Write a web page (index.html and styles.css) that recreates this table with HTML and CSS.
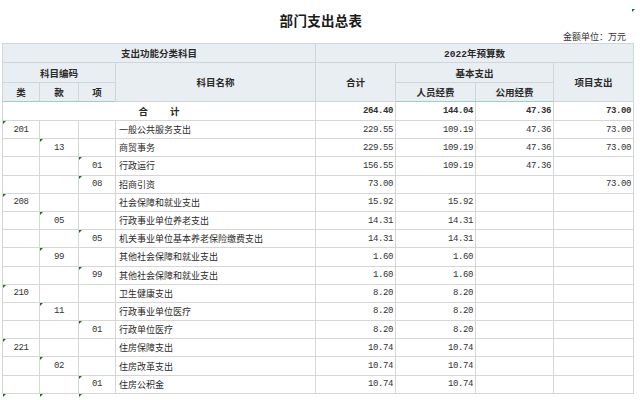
FILE: index.html
```html
<!DOCTYPE html>
<html lang="zh-CN">
<head>
<meta charset="utf-8">
<title>部门支出总表</title>
<link rel="stylesheet" href="styles.css">
</head>
<body>
<div class="page">
  <span class="corner-mark"></span>
  <h1 class="title">部门支出总表</h1>
  <div class="unit">金额单位：万元</div>
  <table class="grid">
    <colgroup>
      <col class="c-lei"><col class="c-kuan"><col class="c-xiang"><col class="c-name">
      <col class="c-num"><col class="c-num"><col class="c-num2"><col class="c-num">
    </colgroup>
    <thead>
      <tr class="h1">
        <th colspan="4">支出功能分类科目</th>
        <th colspan="4" class="yr">2022年预算数</th>
      </tr>
      <tr class="h2">
        <th colspan="3">科目编码</th>
        <th rowspan="2">科目名称</th>
        <th rowspan="2">合计</th>
        <th colspan="2">基本支出</th>
        <th rowspan="2">项目支出</th>
      </tr>
      <tr class="h3">
        <th>类</th><th>款</th><th>项</th>
        <th>人员经费</th><th>公用经费</th>
      </tr>
    </thead>
    <tbody>
      <tr class="total">
        <td colspan="4" class="sum">合<span class="gap"></span>计</td>
        <td class="n">264.40</td><td class="n">144.04</td><td class="n">47.36</td><td class="n">73.00</td>
      </tr>
      <tr><td class="code mk">201</td><td></td><td></td><td class="nm">一般公共服务支出</td><td class="n">229.55</td><td class="n">109.19</td><td class="n">47.36</td><td class="n">73.00</td></tr>
      <tr><td></td><td class="code mk">13</td><td></td><td class="nm">商贸事务</td><td class="n">229.55</td><td class="n">109.19</td><td class="n">47.36</td><td class="n">73.00</td></tr>
      <tr><td></td><td></td><td class="code mk">01</td><td class="nm">行政运行</td><td class="n">156.55</td><td class="n">109.19</td><td class="n">47.36</td><td class="n"></td></tr>
      <tr><td></td><td></td><td class="code mk">08</td><td class="nm">招商引资</td><td class="n">73.00</td><td class="n"></td><td class="n"></td><td class="n">73.00</td></tr>
      <tr><td class="code mk">208</td><td></td><td></td><td class="nm">社会保障和就业支出</td><td class="n">15.92</td><td class="n">15.92</td><td class="n"></td><td class="n"></td></tr>
      <tr><td></td><td class="code mk">05</td><td></td><td class="nm">行政事业单位养老支出</td><td class="n">14.31</td><td class="n">14.31</td><td class="n"></td><td class="n"></td></tr>
      <tr><td></td><td></td><td class="code mk">05</td><td class="nm">机关事业单位基本养老保险缴费支出</td><td class="n">14.31</td><td class="n">14.31</td><td class="n"></td><td class="n"></td></tr>
      <tr><td></td><td class="code mk">99</td><td></td><td class="nm">其他社会保障和就业支出</td><td class="n">1.60</td><td class="n">1.60</td><td class="n"></td><td class="n"></td></tr>
      <tr><td></td><td></td><td class="code mk">99</td><td class="nm">其他社会保障和就业支出</td><td class="n">1.60</td><td class="n">1.60</td><td class="n"></td><td class="n"></td></tr>
      <tr><td class="code mk">210</td><td></td><td></td><td class="nm">卫生健康支出</td><td class="n">8.20</td><td class="n">8.20</td><td class="n"></td><td class="n"></td></tr>
      <tr><td></td><td class="code mk">11</td><td></td><td class="nm">行政事业单位医疗</td><td class="n">8.20</td><td class="n">8.20</td><td class="n"></td><td class="n"></td></tr>
      <tr><td></td><td></td><td class="code mk">01</td><td class="nm">行政单位医疗</td><td class="n">8.20</td><td class="n">8.20</td><td class="n"></td><td class="n"></td></tr>
      <tr><td class="code mk">221</td><td></td><td></td><td class="nm">住房保障支出</td><td class="n">10.74</td><td class="n">10.74</td><td class="n"></td><td class="n"></td></tr>
      <tr><td></td><td class="code mk">02</td><td></td><td class="nm">住房改革支出</td><td class="n">10.74</td><td class="n">10.74</td><td class="n"></td><td class="n"></td></tr>
      <tr><td></td><td></td><td class="code mk">01</td><td class="nm">住房公积金</td><td class="n">10.74</td><td class="n">10.74</td><td class="n"></td><td class="n"></td></tr>
      <tr class="ghost"><td class="mk"></td><td class="mk"></td><td class="mk"></td><td></td><td></td><td></td><td></td><td></td></tr>
    </tbody>
  </table>
</div>
</body>
</html>
```
FILE: styles.css
```css
html, body {
  margin: 0;
  padding: 0;
  background: #ffffff;
}
body {
  font-family: "Noto Sans CJK SC", "Noto Sans", sans-serif;
  color: #2b2b2b;
  width: 640px;
  height: 400px;
  overflow: hidden;
}
.page {
  position: relative;
  padding: 12px 0 0 2px;
}
.corner-mark {
  position: absolute;
  left: 632px;
  top: 9px;
  width: 0;
  height: 0;
  border-top: 3px solid #1f6e1f;
  border-right: 3px solid transparent;
}
.title {
  margin: 0;
  height: 16px;
  line-height: 16px;
  font-size: 13.5px;
  font-weight: bold;
  letter-spacing: 0.3px;
  text-align: center;
  color: #1a1a1a;
}
.unit {
  margin-top: 2px;
  height: 13px;
  line-height: 13px;
  font-size: 9px;
  text-align: right;
  padding-right: 14px;
  color: #333;
}
.grid {
  border-collapse: collapse;
  table-layout: fixed;
  width: 631px;
  font-size: 9px;
}
.c-lei { width: 37px; }
.c-kuan { width: 39px; }
.c-xiang { width: 37px; }
.c-name { width: 200px; }
.c-num { width: 80px; }
.c-num2 { width: 78px; }

.grid th, .grid td {
  border: 1px solid #d6d6d6;
  padding: 0;
  white-space: nowrap;
  overflow: hidden;
}
.grid thead th {
  background: #e8eef2;
  font-weight: bold;
  font-size: 9.5px;
  color: #2a2a2a;
  text-align: center;
  border-color: #cfd6da;
}
.grid thead th.yr {
  font-family: "Liberation Mono", "Noto Sans CJK SC", monospace;
}
.grid .h1 th { height: 18px; }
.grid .h2 th { height: 19px; }
.grid .h3 th { height: 18px; border-bottom: 1px solid #9ad0c2; }
.grid tbody tr { height: 18.2px; }
.grid tbody tr.total { height: 19px; }
.grid tbody tr.total td { font-weight: bold; }
.grid td.sum {
  text-align: center;
  font-size: 9.5px;
}
.gap {
  display: inline-block;
  width: 22px;
}
.grid td.n {
  text-align: right;
  padding-right: 2px;
  font-family: "Liberation Mono", monospace;
  letter-spacing: -0.4px;
  font-size: 9px;
  color: #333;
}
.grid td.code {
  text-align: center;
  font-family: "Liberation Mono", monospace;
  letter-spacing: -0.4px;
  color: #333;
}
.grid td.nm {
  padding-left: 3px;
  color: #2b2b2b;
}
.grid td.mk {
  position: relative;
}
.grid td.mk::before {
  content: "";
  position: absolute;
  left: 0;
  top: 0;
  width: 0;
  height: 0;
  border-top: 3px solid #1f6e1f;
  border-right: 3px solid transparent;
}
.grid tr.ghost td {
  border: none;
}
```
